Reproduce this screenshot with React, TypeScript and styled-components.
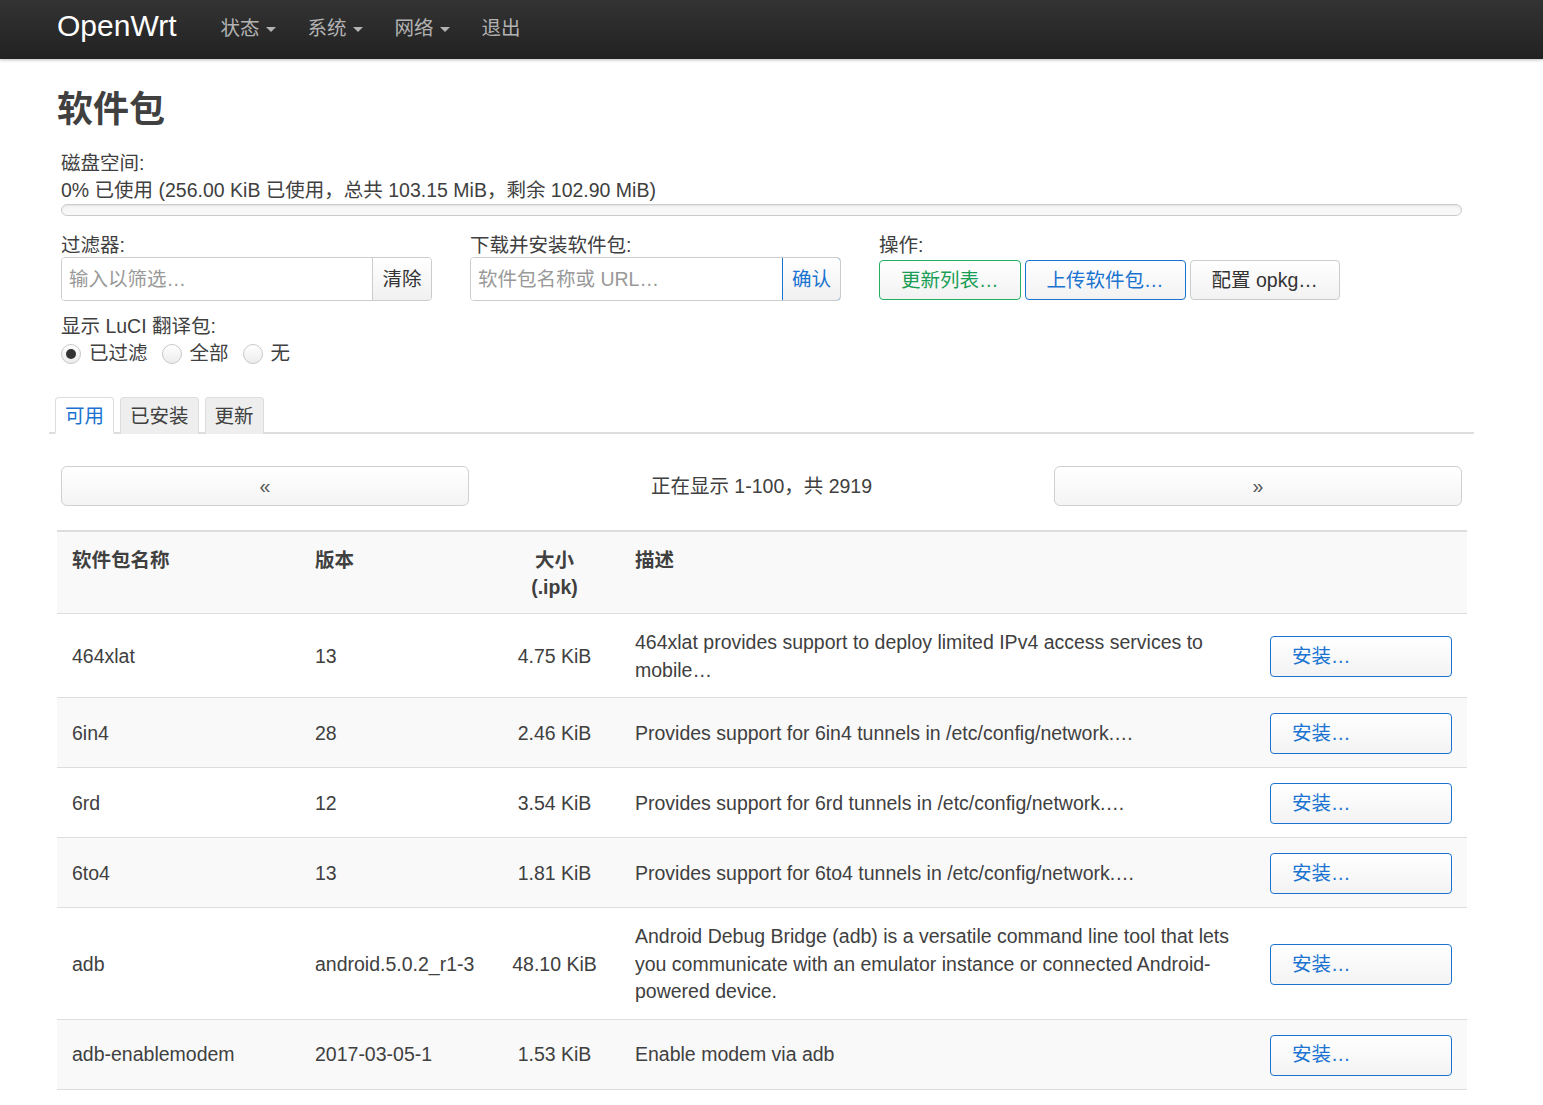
import { createGlobalStyle, styled } from "styled-components";

const GlobalStyle = createGlobalStyle`
  html, body {
    margin: 0;
    padding: 0;
    background: #fff;
  }
  body {
    font-family: "Liberation Sans", "Noto Sans CJK SC", sans-serif;
    font-size: 19.5px;
    line-height: 27px;
    color: #404040;
  }
  * {
    box-sizing: border-box;
  }
`;

const TopBar = styled.header`
  height: 59px;
  background: linear-gradient(to bottom, #333333, #222222);
  box-shadow: 0 1px 3px rgba(0, 0, 0, 0.25);
  display: flex;
  align-items: center;
  padding-left: 57px;
`;

const Brand = styled.a`
  font-size: 30px;
  color: #ffffff;
  padding-right: 28px;
  margin-top: -8px;
  text-decoration: none;
`;

const NavList = styled.ul`
  display: flex;
  margin: -3px 0 0;
  padding: 0;
  list-style: none;

  li {
    padding: 0 16px;
    color: #b3b3b3;
    display: flex;
    align-items: center;
  }
`;

const Caret = styled.span`
  display: inline-block;
  margin-left: 6px;
  margin-top: 2px;
  border-left: 5px solid transparent;
  border-right: 5px solid transparent;
  border-top: 5px solid #b3b3b3;
`;

const Main = styled.main`
  width: 1410px;
  margin-left: 57px;
  padding-top: 24px;
`;

const Title = styled.h2`
  margin: 0;
  font-size: 36px;
  line-height: 54px;
  font-weight: bold;
  color: #404040;
`;

const Section = styled.div`
  padding: 13px 5px 0 4px;
`;

const DiskBar = styled.div`
  height: 12px;
  border: 1px solid #cccccc;
  border-radius: 6px;
  background: linear-gradient(to bottom, #f5f5f5, #f9f9f9);
  box-shadow: inset 0 1px 2px rgba(0, 0, 0, 0.08);
`;

const ControlGrid = styled.div`
  display: grid;
  grid-template-columns: 371px 371px 1fr;
  column-gap: 38px;
  margin-top: 16px;
`;

const Field = styled.div`
  display: flex;
  flex-direction: column;
`;

const InputGroup = styled.div`
  display: flex;
  height: 44px;
  margin-top: -2px;
  border: 1px solid #cccccc;
  border-radius: 4px;
  overflow: hidden;
`;

const TextInput = styled.input`
  flex: 1;
  min-width: 0;
  border: none;
  outline: none;
  padding: 0 7px;
  font: inherit;
  color: #404040;

  &::placeholder {
    color: #999999;
  }
`;

const AddonButton = styled.button<{ $tone?: "blue" }>`
  width: 59px;
  margin: 0;
  border: none;
  border-left: 1px solid #cccccc;
  background: linear-gradient(to bottom, #ffffff, #f0f0f0);
  font: inherit;
  color: #333333;
  padding: 0;

  ${(p) =>
    p.$tone === "blue" &&
    `
    margin: -1px -1px -1px 0;
    border: 1px solid #1a73d0;
    border-radius: 0 4px 4px 0;
    color: #1a73d0;
  `}
`;

const ActionRow = styled.div`
  display: flex;
  gap: 4px;
  margin-top: 1px;
`;

const toneColors = {
  green: { border: "#22b062", text: "#1a9e55" },
  blue: { border: "#1a73d0", text: "#1a73d0" },
  neutral: { border: "#cccccc", text: "#333333" },
};

const ActionButton = styled.button<{ $tone: keyof typeof toneColors }>`
  height: 40px;
  padding: 0 21px;
  border: 1px solid ${(p) => toneColors[p.$tone].border};
  border-radius: 4px;
  background: linear-gradient(to bottom, #ffffff, #f2f2f2);
  font: inherit;
  color: ${(p) => toneColors[p.$tone].text};
  white-space: nowrap;
`;

const LangField = styled.div`
  margin-top: 12px;
`;

const RadioRow = styled.div`
  display: flex;
  align-items: center;
`;

const RadioLabel = styled.label`
  display: flex;
  align-items: center;
  margin-right: 14px;
`;

const RadioDot = styled.span<{ $checked?: boolean }>`
  width: 20px;
  height: 20px;
  border-radius: 50%;
  border: 1px solid #c8c8c8;
  background: linear-gradient(to bottom, #ffffff, #ececec);
  margin-right: 8px;
  display: flex;
  align-items: center;
  justify-content: center;

  &::after {
    content: "";
    width: 10px;
    height: 10px;
    border-radius: 50%;
    background: ${(p) => (p.$checked ? "#333333" : "transparent")};
  }
`;

const Tabs = styled.ul`
  display: flex;
  gap: 6px;
  margin: 30px -7px 0 -8px;
  padding: 0 0 0 6px;
  list-style: none;
  border-bottom: 2px solid #dddddd;
`;

const Tab = styled.li<{ $active?: boolean }>`
  height: 37px;
  padding: 5px 9px;
  margin-bottom: -2px;
  border: 1px solid #dddddd;
  border-bottom: ${(p) => (p.$active ? "2px solid #ffffff" : "none")};
  border-radius: 4px 4px 0 0;
  background: ${(p) => (p.$active ? "#ffffff" : "#eeeeee")};
  color: ${(p) => (p.$active ? "#1a73d0" : "#404040")};
`;

const Pager = styled.div`
  display: grid;
  grid-template-columns: 408px 1fr 408px;
  align-items: center;
  margin: 32px 5px 0 4px;
`;

const PagerButton = styled.button`
  height: 40px;
  border: 1px solid #d0d0d0;
  border-radius: 6px;
  background: linear-gradient(to bottom, #ffffff, #f4f4f4);
  font: inherit;
  color: #555555;
`;

const PagerInfo = styled.div`
  text-align: center;
`;

const Table = styled.table`
  width: 100%;
  margin-top: 24px;
  border-collapse: collapse;
  table-layout: fixed;
  line-height: 27.5px;
`;

const HeadCell = styled.th<{ $center?: boolean }>`
  padding: 15px 15px 12px;
  text-align: ${(p) => (p.$center ? "center" : "left")};
  vertical-align: top;
  font-weight: bold;
  line-height: 27px;
  background: #f9f9f9;
  border-top: 2px solid #dddddd;
`;

const Row = styled.tr<{ $striped?: boolean }>`
  background: ${(p) => (p.$striped ? "#f9f9f9" : "#ffffff")};
  border-top: 1px solid #dddddd;
  border-bottom: 1px solid #dddddd;
`;

const Cell = styled.td<{ $center?: boolean; $nowrap?: boolean }>`
  padding: 15px 15px 13px;
  vertical-align: middle;
  text-align: ${(p) => (p.$center ? "center" : "left")};
  white-space: ${(p) => (p.$nowrap ? "nowrap" : "normal")};
`;

const InstallButton = styled.button`
  display: block;
  width: 182px;
  height: 41px;
  padding: 0 0 0 21px;
  text-align: left;
  border: 1px solid #1a73d0;
  border-radius: 4px;
  background: linear-gradient(to bottom, #ffffff, #f3f3f3);
  font: inherit;
  color: #1a73d0;
`;

const packages = [
  {
    name: "464xlat",
    version: "13",
    size: "4.75 KiB",
    desc: "464xlat provides support to deploy limited IPv4 access services to mobile…",
  },
  {
    name: "6in4",
    version: "28",
    size: "2.46 KiB",
    desc: "Provides support for 6in4 tunnels in /etc/config/network.…",
  },
  {
    name: "6rd",
    version: "12",
    size: "3.54 KiB",
    desc: "Provides support for 6rd tunnels in /etc/config/network.…",
  },
  {
    name: "6to4",
    version: "13",
    size: "1.81 KiB",
    desc: "Provides support for 6to4 tunnels in /etc/config/network.…",
  },
  {
    name: "adb",
    version: "android.5.0.2_r1-3",
    size: "48.10 KiB",
    desc: "Android Debug Bridge (adb) is a versatile command line tool that lets you communicate with an emulator instance or connected Android-powered device.",
  },
  {
    name: "adb-enablemodem",
    version: "2017-03-05-1",
    size: "1.53 KiB",
    desc: "Enable modem via adb",
  },
];

export default function App() {
  return (
    <>
      <GlobalStyle />
      <TopBar>
        <Brand href="#">OpenWrt</Brand>
        <NavList>
          <li>状态<Caret /></li>
          <li>系统<Caret /></li>
          <li>网络<Caret /></li>
          <li>退出</li>
        </NavList>
      </TopBar>

      <Main>
        <Title>软件包</Title>

        <Section>
          <div>磁盘空间:</div>
          <div>0% 已使用 (256.00 KiB 已使用，总共 103.15 MiB，剩余 102.90 MiB)</div>
          <DiskBar />

          <ControlGrid>
            <Field>
              <span>过滤器:</span>
              <InputGroup>
                <TextInput placeholder="输入以筛选…" />
                <AddonButton>清除</AddonButton>
              </InputGroup>
            </Field>
            <Field>
              <span>下载并安装软件包:</span>
              <InputGroup>
                <TextInput placeholder="软件包名称或 URL…" />
                <AddonButton $tone="blue">确认</AddonButton>
              </InputGroup>
            </Field>
            <Field>
              <span>操作:</span>
              <ActionRow>
                <ActionButton $tone="green">更新列表…</ActionButton>
                <ActionButton $tone="blue">上传软件包…</ActionButton>
                <ActionButton $tone="neutral">配置 opkg…</ActionButton>
              </ActionRow>
            </Field>
          </ControlGrid>

          <LangField>
            <div>显示 LuCI 翻译包:</div>
            <RadioRow>
              <RadioLabel><RadioDot $checked />已过滤</RadioLabel>
              <RadioLabel><RadioDot />全部</RadioLabel>
              <RadioLabel><RadioDot />无</RadioLabel>
            </RadioRow>
          </LangField>
        </Section>

        <Tabs>
          <Tab $active>可用</Tab>
          <Tab>已安装</Tab>
          <Tab>更新</Tab>
        </Tabs>

        <Pager>
          <PagerButton>«</PagerButton>
          <PagerInfo>正在显示 1-100，共 2919</PagerInfo>
          <PagerButton>»</PagerButton>
        </Pager>

        <Table>
          <colgroup>
            <col style={{ width: 243 }} />
            <col style={{ width: 189 }} />
            <col style={{ width: 131 }} />
            <col style={{ width: 635 }} />
            <col />
          </colgroup>
          <thead>
            <tr>
              <HeadCell>软件包名称</HeadCell>
              <HeadCell>版本</HeadCell>
              <HeadCell $center>大小<br />(.ipk)</HeadCell>
              <HeadCell>描述</HeadCell>
              <HeadCell />
            </tr>
          </thead>
          <tbody>
            {packages.map((pkg, i) => (
              <Row key={pkg.name} $striped={i % 2 === 1}>
                <Cell>{pkg.name}</Cell>
                <Cell $nowrap>{pkg.version}</Cell>
                <Cell $center>{pkg.size}</Cell>
                <Cell>{pkg.desc}</Cell>
                <Cell><InstallButton>安装…</InstallButton></Cell>
              </Row>
            ))}
          </tbody>
        </Table>
      </Main>
    </>
  );
}
